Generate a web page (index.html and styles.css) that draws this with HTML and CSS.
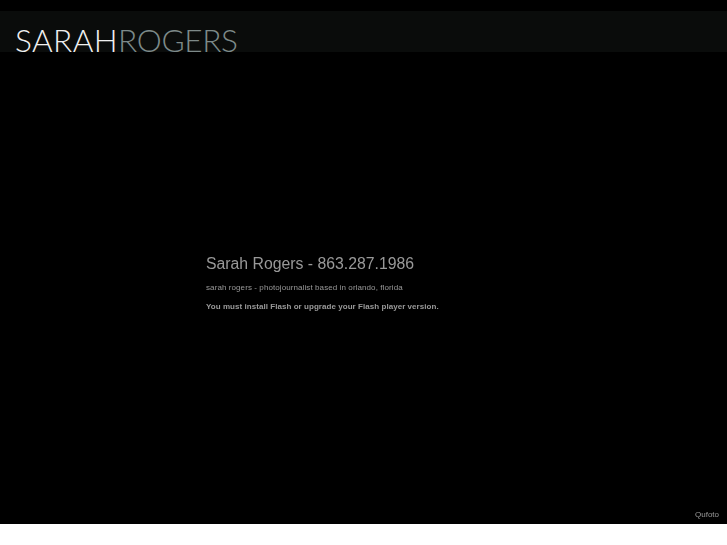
FILE: index.html
```html
<!DOCTYPE html>
<html lang="en">
<head>
    <meta charset="UTF-8">
    <title>Sarah Rogers - 863.287.1986</title>
    <link rel="stylesheet" href="styles.css">
</head>
<body>
    <div class="page">
        <div class="banner">
            <span class="logo">SARAH<span class="logoLast">ROGERS</span></span>
        </div>
        <div class="content">
            <h1>Sarah Rogers - 863.287.1986</h1>
            <p class="about">sarah rogers - photojournalist based in orlando, florida</p>
            <p class="notice">You must install Flash or upgrade your Flash player version.</p>
        </div>
        <div class="credit">Qufoto</div>
    </div>
</body>
</html>
```

FILE: styles.css
```css
html, body {
    margin: 0;
    padding: 0;
    background-color: #fff;
}

.page {
    height: 524px;
    background-color: #000;
    display: flex;
    flex-direction: column;
    overflow: hidden;
    font-family: "Liberation Sans", Arial, sans-serif;
    color: #999;
}

.banner {
    margin-top: 11px;
    height: 41px;
    padding-left: 15px;
    background-color: #0a0c0b;
    display: flex;
    align-items: flex-end;
}

.logo {
    font-family: Lato, sans-serif;
    font-weight: 300;
    font-size: 31.6px;
    line-height: 23px;
    letter-spacing: 0.4px;
    color: #f0f0f0;
}

.logoLast {
    color: #7d8a89;
    letter-spacing: -0.35px;
}

.content {
    flex: 1;
    padding: 202px 0 0 206px;
    will-change: opacity;
}

h1 {
    margin: 0;
    font-size: 15.8px;
    line-height: 20px;
    font-weight: normal;
}

.about {
    margin: 8px 0 0;
    font-size: 8px;
    line-height: 11px;
    letter-spacing: 0.09px;
}

.notice {
    margin: 8px 0 0;
    font-size: 8px;
    line-height: 11px;
    font-weight: bold;
    letter-spacing: 0.05px;
}

.credit {
    text-align: right;
    padding: 0 8px 4px 0;
    font-size: 8px;
    line-height: 10px;
    will-change: opacity;
}
```
